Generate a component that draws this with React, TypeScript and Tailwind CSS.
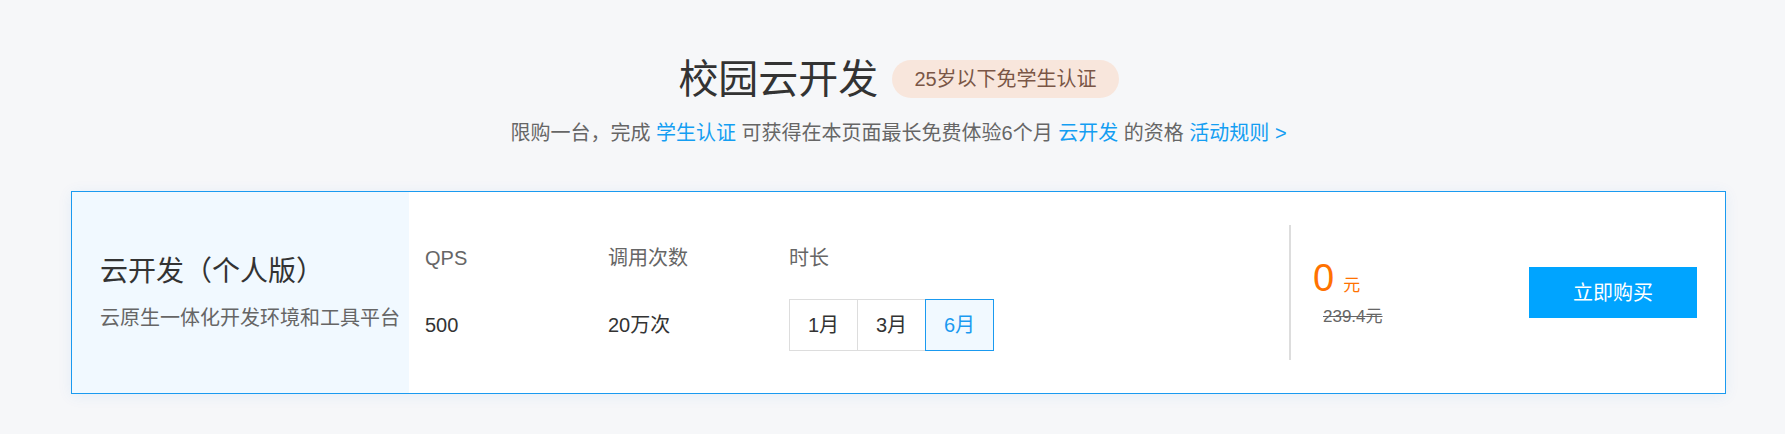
import { useState } from "react";

const durations = ["1月", "3月", "6月"];

const App = () => {
  const [duration, setDuration] = useState<string>("6月");

  return (
    <div
      className="min-h-[434px] w-full bg-[#f6f7f9] text-[#333]"
      style={{ fontFamily: '"Liberation Sans", "Noto Sans CJK SC", sans-serif' }}
    >
      <div className="ml-[71px] w-[1655px] pt-[55px]">
        <div className="flex items-center justify-center">
          <h1 className="text-[40px] leading-[48px] font-normal text-[#333]">校园云开发</h1>
          <span className="ml-[14px] h-[38px] rounded-full bg-[#f8e6dc] px-[22px] text-[20px] leading-[38px] text-[#7a5646]">
            25岁以下免学生认证
          </span>
        </div>

        <p className="mt-[16px] text-center text-[20px] leading-[28px] text-[#666]">
          限购一台，完成 <a className="text-[#149ef2]">学生认证</a> 可获得在本页面最长免费体验6个月{" "}
          <a className="text-[#149ef2]">云开发</a> 的资格 <a className="text-[#149ef2]">活动规则 &gt;</a>
        </p>

        <div className="mt-[44px] flex h-[203px] border border-[#1a9af0] bg-white shadow-[0_2px_14px_rgba(20,110,220,0.08)]">
          <div className="flex w-[337px] flex-col justify-center bg-[#f1f9ff] pl-[28px]">
            <div className="text-[28px] leading-[36px] text-[#333]">云开发（个人版）</div>
            <div className="mt-[14px] text-[20px] leading-[28px] text-[#666]">云原生一体化开发环境和工具平台</div>
          </div>

          <div className="flex flex-1 pl-[16px] pt-[52px]">
            <div className="w-[183px]">
              <div className="text-[20px] leading-[28px] text-[#666]">QPS</div>
              <div className="mt-[27px] flex h-[52px] items-center text-[20px] text-[#333]">500</div>
            </div>
            <div className="w-[181px]">
              <div className="text-[20px] leading-[28px] text-[#666]">调用次数</div>
              <div className="mt-[27px] flex h-[52px] items-center text-[20px] text-[#333]">20万次</div>
            </div>
            <div>
              <div className="text-[20px] leading-[28px] text-[#666]">时长</div>
              <div className="mt-[27px] flex">
                {durations.map((d, i) => (
                  <button
                    key={d}
                    onClick={() => setDuration(d)}
                    className={`h-[52px] w-[69px] border text-[20px] ${i > 0 ? "-ml-px" : ""} ${
                      duration === d
                        ? "relative z-10 border-[#1a9af0] bg-[#f1f9ff] text-[#1a9af0]"
                        : "border-[#dddddd] bg-white text-[#333]"
                    }`}
                  >
                    {d}
                  </button>
                ))}
              </div>
            </div>
          </div>

          <div className="h-[135px] w-[2px] self-center bg-[#dddddd]" />

          <div className="flex w-[434px] items-center justify-between pl-[22px] pr-[28px]">
            <div>
              <div className="flex items-baseline text-[#ff7200]">
                <span className="text-[38px] leading-[40px]">0</span>
                <span className="ml-[9px] text-[17px]">元</span>
              </div>
              <div className="ml-[10px] mt-[8px] text-[17px] leading-[20px] text-[#666] line-through">239.4元</div>
            </div>
            <button className="h-[51px] w-[168px] bg-[#00a4ff] text-[20px] text-white">立即购买</button>
          </div>
        </div>
      </div>
    </div>
  );
};

export default App;
